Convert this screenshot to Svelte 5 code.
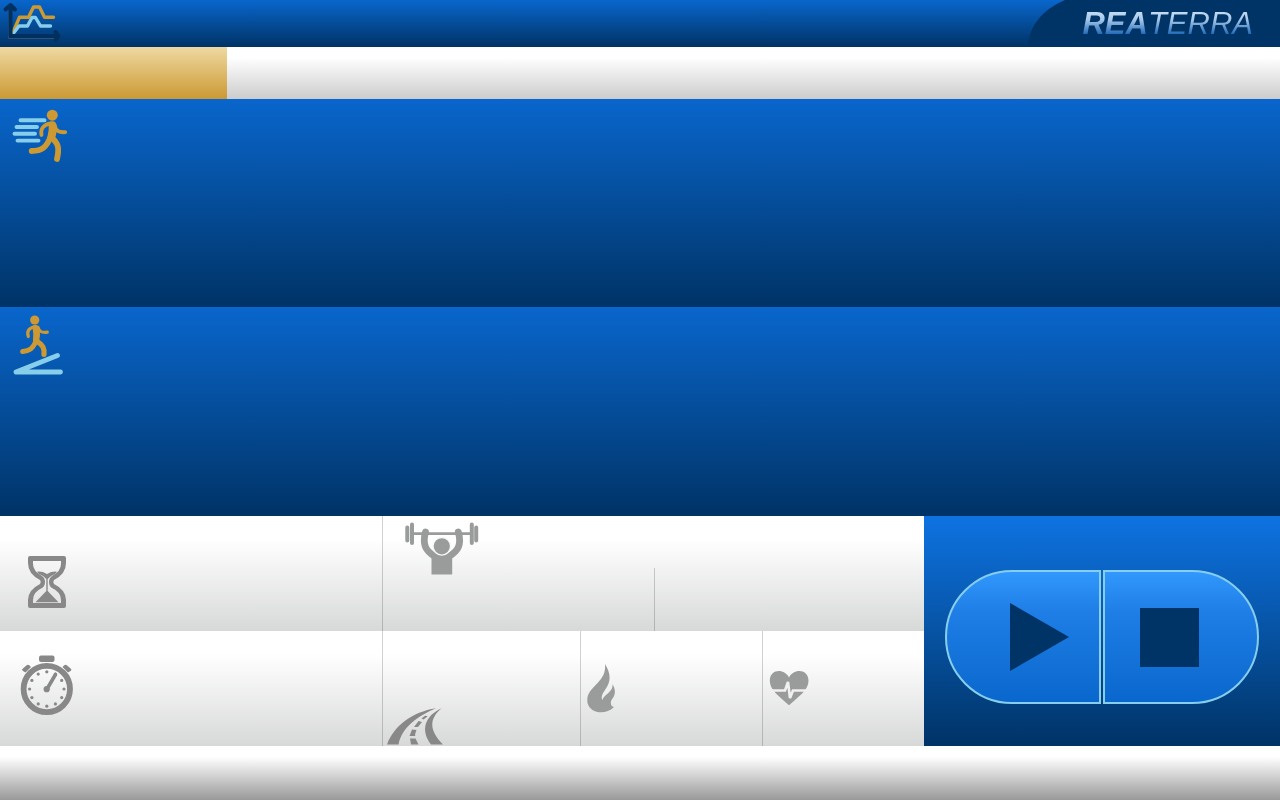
<script>
  const ticks = Array.from({ length: 12 }, (_, i) => {
    const a = (i * Math.PI) / 6;
    return { x: 46.8 + 17.2 * Math.sin(a), y: 689 - 17.2 * Math.cos(a) };
  });
</script>

<main class="console">
  <header>
    <svg class="profile" width="64" height="47" viewBox="0 0 64 47" fill="none" stroke-linecap="round" stroke-linejoin="round">
      <path d="M13 32.500L19.500 17.200H28.500L33.500 7H39.500L44.500 17.200H53.500" stroke="#cc9933" stroke-width="3.400" />
      <path d="M14 32.500L19 26H27.500L32 17.500H35.500L40.500 26H50.500" stroke="#87ceeb" stroke-width="3.400" />
      <path d="M8.500 12V38.500H55L60 37" stroke="#52616a" stroke-opacity=".6" stroke-width="1" />
      <path d="M10.500 5.500V36H57M5.500 9.500L10.500 5L15 9.500M55.500 32L58.500 36L55.500 40" stroke="#00305f" stroke-width="4" />
    </svg>
    <div class="brand">
      <svg width="41" height="47" viewBox="0 0 41 47" preserveAspectRatio="none"><path d="M37 0C14 10 1 26 0 47H41V0Z" fill="#003366" /></svg>
      <div class="plate"><h1><b>REA</b>TERRA</h1></div>
    </div>
  </header>

  <nav aria-label="Program progress"><div class="progress"></div></nav>

  <section class="metric speed">
    <svg width="60" height="56" viewBox="10 108 60 56" fill="none" stroke-linecap="round" stroke-linejoin="round">
      <path d="M20.500 120.200H44.500M16.500 127H37M14.500 133.700H35M17.500 140.600H38.500" stroke="#87ceeb" stroke-width="3.900" />
      <g stroke="#cc9933">
        <circle cx="52.300" cy="115.200" r="5.500" fill="#cc9933" stroke="none" />
        <path d="M49.500 123Q54 120.500 55.500 124Q57 131 54 139L48 138Q50 130 49.500 124Z" fill="#cc9933" stroke-width="1.500" />
        <path d="M51 123.500C43.500 124.500 40 129 41.500 135" stroke-width="3.800" />
        <path d="M54.500 125C56 131.500 59 132.500 65.200 132.200" stroke-width="3.800" />
        <path d="M51.500 137.500C58.500 143.500 59.500 148 57 159" stroke-width="5.800" />
        <path d="M50.500 137C46.500 147 42 151 31.700 151" stroke-width="5.800" />
      </g>
    </svg>
  </section>

  <section class="metric incline">
    <svg width="54" height="64" viewBox="12 314 54 64" fill="none" stroke-linecap="round" stroke-linejoin="round">
      <g stroke="#cc9933">
        <circle cx="34.700" cy="320" r="4.600" fill="#cc9933" stroke="none" />
        <path d="M33 326.500Q37 324 39 328Q40 335 38.500 342L33.500 341Q34.500 333 33 327Z" fill="#cc9933" stroke-width="1.200" />
        <path d="M35 326.500C29 328 26.500 331 28.300 336.500" stroke-width="3.200" />
        <path d="M38 327.500C39.500 332 42 333 47.300 332.200" stroke-width="3.200" />
        <path d="M36.500 341C43 345 44.500 348 44 354.500" stroke-width="5.200" />
        <path d="M36 341C33 348 30.500 351 22.500 351.500" stroke-width="4.800" />
      </g>
      <path d="M57.500 355.500L16 372H60.500" stroke="#87ceeb" stroke-width="4.800" />
    </svg>
  </section>

  <section class="dashboard">
    <div class="stats">
      <div class="row top">
        <div class="cell remaining">
          <svg width="40" height="54" viewBox="27 555 40 54">
            <path fill="#888888" fill-rule="evenodd" d="M30 556H64Q66 556 66 558V563Q66 574 54 580Q52.500 582 54 584Q66 590 66 600V606Q66 608 64 608H30Q28 608 28 606V600Q28 590 40 584Q41.500 582 40 580Q28 574 28 563V558Q28 556 30 556ZM33 561V564Q33 571 42 576Q45 578 45 582Q45 586 42 588Q33 592 33 600V603H61V600Q61 592 52 588Q49 586 49 582Q49 578 52 576Q61 571 61 564V561Z" />
            <path fill="#888888" d="M37 571.700Q42 571 47 574Q52 571 57 571.700Q55 575 51 576L47.700 579V591L58.500 602.300H35.500L46.300 591V579L43 576Q39 575 37 571.700Z" />
          </svg>
        </div>
        <div class="cell effort">
          <svg width="76" height="56" viewBox="404 521 76 56" stroke-linecap="round" fill="none" stroke="#9a9c9b">
            <path d="M414 533.700H470" stroke-width="2.800" />
            <path d="M407.300 527.500V540.500M476.200 527.500V540.500" stroke-width="4" />
            <path d="M412 524.500V543M471.800 524.500V543" stroke-width="4" />
            <path d="M425.500 532C422 545 426 551 435 556.500M458.300 532C462 545 458 551 448.700 556.500" stroke-width="6.800" />
            <path d="M427 547L431.500 558V574.500H452.200V558L457 547C453 557 431 557 427 547Z" fill="#9a9c9b" stroke="none" />
            <circle cx="441.800" cy="546.300" r="8.800" fill="#9a9c9b" stroke="#f8f8f8" stroke-width="1.400" />
          </svg>
          <div class="split"></div>
        </div>
      </div>
      <div class="row lower">
        <div class="cell elapsed">
          <svg width="56" height="62" viewBox="19 654 56 62">
            <circle cx="46.800" cy="689" r="23.200" fill="none" stroke="#888888" stroke-width="5.800" />
            <rect x="39" y="655.500" width="15.500" height="6.500" rx="2" fill="#888888" />
            <path d="M24 667.500L27 665Q28.500 664 31 667L25.500 672.500Q21.500 670.500 22.200 669.200ZM69.500 667.500L66.500 665Q65 664 62.500 667L68 672.500Q72 670.500 71.300 669.200Z" fill="#888888" />
            <path d="M47 689L55.500 674.500" stroke="#888888" stroke-width="3.600" stroke-linecap="round" />
            <circle cx="46.700" cy="689.200" r="3.100" fill="#888888" />
            {#each ticks as tick}<circle cx={tick.x} cy={tick.y} r="1.600" fill="#888888" />{/each}
          </svg>
        </div>
        <div class="cell distance">
          <svg width="58" height="38" viewBox="386 707 58 38" fill="#888888">
            <path d="M387 744.500C394 726 412 712 436 708.300C418 716 402 727 398.500 744.500Z" />
            <path d="M441.500 708.300C429 719 429 730 443 744.500H431C420 730 425 716 441.500 708.300Z" />
            <path d="M425 715.800L427.800 716.200L423.500 719.500L421.500 718.500ZM418.500 721L422 722L418 727H414ZM412 729.500L416.500 730Q414.800 734 415.200 736H409.500ZM410 738.500H415.500L418.500 744.500H411Z" />
          </svg>
        </div>
        <div class="cell calories">
          <svg width="30" height="50" viewBox="586 663 30 50" fill="#9a9c9b">
            <path d="M605 664C609 671 613 679 605 690C601.500 695 601 698 602.500 700C604 694 613.500 692 612.500 684C616.500 691 615 696 611.500 700C610 704 611 706 614 707C605 716 590 713 587.500 703C585 686 607 684 605 664Z" />
          </svg>
        </div>
        <div class="cell heart">
          <svg width="42" height="38" viewBox="768 669 42 38">
            <path fill="#9a9c9b" d="M789 677.500C785 668.500 769.800 668 769.800 681C769.800 690 780 697 789 705.200C798 697 808.500 690 808.500 681C808.500 668 793 668.500 789 677.500Z" />
            <path d="M769 690.500H785L788 682L790 698L793 690.500H809" fill="none" stroke="#f0f0f0" stroke-width="2.600" stroke-linejoin="miter" />
          </svg>
        </div>
      </div>
    </div>

    <div class="controls">
      <button class="play" aria-label="Start"><svg width="59" height="68" viewBox="0 0 59 68"><path d="M0 0L59 34L0 68Z" fill="#003366" /></svg></button>
      <button class="stop" aria-label="Stop"><svg width="59" height="59" viewBox="0 0 59 59"><path d="M0 0H59V59H0Z" fill="#003366" /></svg></button>
    </div>
  </section>

  <footer></footer>
</main>

<style>
  .console {
    min-height: 100vh;
    display: grid;
    grid-template-rows: 47px 52px 208fr 209fr 230px 54px;
    font-family: "Liberation Sans", Arial, sans-serif;
    background: #003366;
  }
  svg { display: block; flex: none; }
  header {
    display: flex;
    justify-content: space-between;
    background: linear-gradient(#0966cc, #003366);
  }
  .brand { display: flex; }
  .plate {
    background: #003366;
    padding: 4px 27px 0 13px;
  }
  h1 {
    margin: 0;
    font-size: 31px;
    line-height: 39px;
    font-weight: 400;
    font-style: italic;
    color: transparent;
    background: linear-gradient(#cce0f5 15%, #a6c8ea 40%, #1763b5 80%);
    background-clip: text;
  }
  nav { background: linear-gradient(#ffffff 20%, #cccccc); }
  .progress {
    width: 17.75%;
    height: 100%;
    background: linear-gradient(#eed9a2, #cc9933);
  }
  .metric { background: linear-gradient(#0966cc, #003366); }
  .speed { padding: 9px 10px; }
  .incline { padding: 7px 12px; }
  .dashboard {
    display: grid;
    grid-template-columns: 924fr 356fr;
  }
  .stats {
    display: grid;
    grid-template-rows: 1fr 1fr;
  }
  .row {
    display: grid;
    background: linear-gradient(#ffffff 20%, #d7d9d8);
  }
  .top { grid-template-columns: 382fr 542fr; }
  .lower { grid-template-columns: 382fr 198fr 182fr 162fr; }
  .cell { display: flex; align-items: flex-start; }
  .cell + .cell { border-left: 1px solid rgba(0, 0, 0, 0.18); }
  .remaining { padding: 39px 27px 0; }
  .effort { padding: 5px 0 0 21px; justify-content: space-between; }
  .split {
    align-self: flex-end;
    box-sizing: border-box;
    width: 52%;
    height: 63px;
    border-left: 1px solid rgba(0, 0, 0, 0.18);
  }
  .elapsed { padding: 23px 19px 0; }
  .distance { padding: 76px 3px 0; }
  .calories { padding: 32px 5px 0; }
  .heart { padding: 38px 5px 0; }
  .controls {
    display: flex;
    align-items: center;
    justify-content: center;
    gap: 2px;
    padding-top: 12px;
    background: linear-gradient(#0e73e1, #0a63c3 25%, #003366);
  }
  button {
    box-sizing: border-box;
    width: 156px;
    height: 134px;
    display: flex;
    align-items: center;
    padding: 0;
    border: 2px solid #87ceeb;
    background: linear-gradient(#3399ff, #1f7fe6 30%, #0966cc) border-box;
  }
  .play {
    justify-content: flex-end;
    padding-right: 30px;
    border-radius: 67px 0 0 67px;
  }
  .stop {
    padding-left: 35px;
    border-radius: 0 67px 67px 0;
  }
  footer { background: linear-gradient(#ffffff 20%, #999999); }
</style>
